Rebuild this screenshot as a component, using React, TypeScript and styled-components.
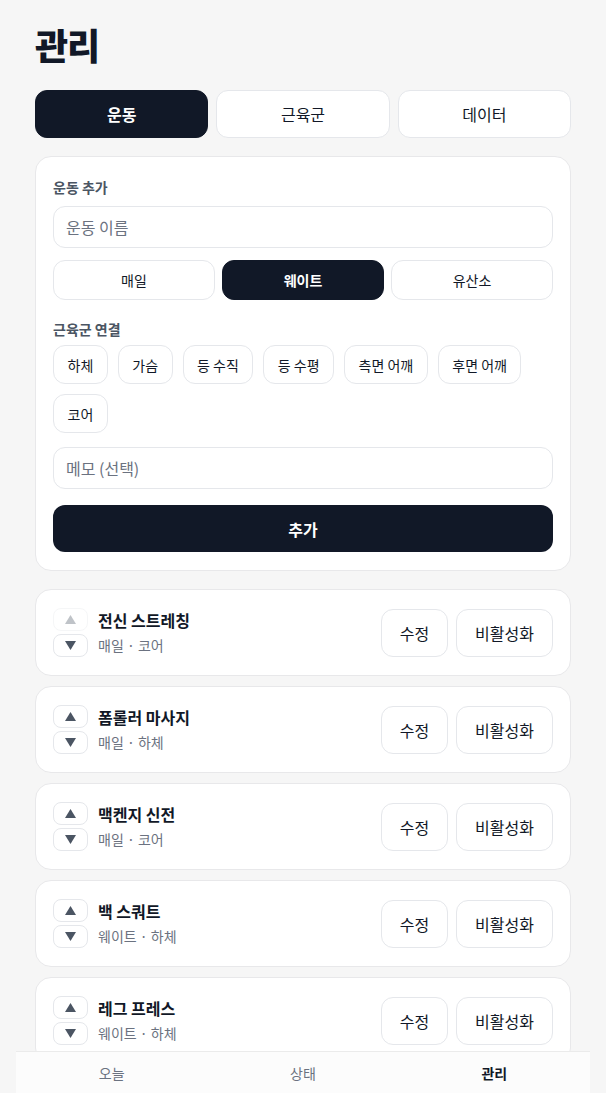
import React, {useState} from 'react';
import styled, {createGlobalStyle} from 'styled-components';

const GlobalStyle = createGlobalStyle`
  * { box-sizing: border-box; }
  body {
    margin: 0;
    background: #f6f6f6;
    font-family: "Noto Sans CJK KR", "Noto Sans", sans-serif;
    color: #111827;
  }
`;

const Page = styled.div`
  padding: 22px 35px 70px;
`;
const Title = styled.h1`
  font-size: 36px;
  line-height: 44px;
  font-weight: 800;
  margin: 0 0 24px;
  letter-spacing: -1px;
`;
const Tabs = styled.div`
  display: grid;
  grid-template-columns: repeat(3, 1fr);
  gap: 8px;
  margin-bottom: 18px;
`;
const Tab = styled.button<{ $active?: boolean }>`
  height: 48px;
  border-radius: 12px;
  border: 1px solid ${p => p.$active ? '#111827' : '#e5e7eb'};
  background: ${p => p.$active ? '#111827' : 'white'};
  color: ${p => p.$active ? 'white' : '#111827'};
  font-family: inherit;
  font-size: 16px;
  font-weight: ${p => p.$active ? 600 : 400};
`;
const Card = styled.div`
  background: white;
  border: 1px solid #e8e8ea;
  border-radius: 16px;
  padding: 20px 17px 18px;
  display: flex;
  flex-direction: column;
`;
const Label = styled.div<{ $gap?: number }>`
  font-size: 14px;
  line-height: 20px;
  font-weight: 700;
  color: #4b5563;
  margin-bottom: ${p => p.$gap ?? 9}px;
`;
const Input = styled.input`
  height: 42px;
  border: 1px solid #e5e7eb;
  border-radius: 12px;
  padding: 0 12px;
  font-family: inherit;
  font-size: 16px;
  color: #111827;
  outline: none;
  &::placeholder { color: #6b7280; }
`;
const TypeRow = styled.div`
  display: grid;
  grid-template-columns: repeat(3, 1fr);
  gap: 7px;
  margin: 12px 0 19px;
`;
const TypeButton = styled.button<{ $active?: boolean }>`
  height: 40px;
  border-radius: 12px;
  border: 1px solid ${p => p.$active ? '#111827' : '#e5e7eb'};
  background: ${p => p.$active ? '#111827' : 'white'};
  color: ${p => p.$active ? 'white' : '#111827'};
  font-family: inherit;
  font-size: 14px;
  font-weight: ${p => p.$active ? 700 : 400};
`;
const Chips = styled.div`
  display: flex;
  flex-wrap: wrap;
  gap: 10px;
  margin-bottom: 14px;
`;
const Chip = styled.button<{ $active?: boolean }>`
  height: 39px;
  padding: 0 13.5px;
  border-radius: 12px;
  border: 1px solid ${p => p.$active ? '#111827' : '#e5e7eb'};
  background: ${p => p.$active ? '#111827' : 'white'};
  color: ${p => p.$active ? 'white' : '#111827'};
  font-family: inherit;
  font-size: 14px;
`;
const AddButton = styled.button`
  margin-top: 16px;
  height: 47px;
  border: none;
  border-radius: 12px;
  background: #111827;
  color: white;
  font-family: inherit;
  font-size: 16px;
  font-weight: 700;
`;
const List = styled.div`
  display: flex;
  flex-direction: column;
  gap: 10px;
  margin-top: 18px;
`;
const Item = styled.div`
  background: white;
  border: 1px solid #e8e8ea;
  border-radius: 16px;
  padding: 18px 17px;
  display: flex;
  align-items: center;
  gap: 10px;
`;
const Arrows = styled.div`
  display: flex;
  flex-direction: column;
  gap: 3px;
`;
const ArrowButton = styled.button<{ $disabled?: boolean }>`
  width: 35px;
  height: 23px;
  border: 1px solid #e5e7eb;
  border-radius: 8px;
  background: white;
  color: #4b5563;
  padding: 0;
  display: flex;
  align-items: center;
  justify-content: center;
  opacity: ${p => p.$disabled ? 0.35 : 1};
`;
const Info = styled.div`
  flex: 1;
  display: flex;
  flex-direction: column;
  gap: 4px;
  margin-top: -2px;
`;
const Name = styled.div`
  font-size: 16px;
  line-height: 22px;
  font-weight: 700;
`;
const Meta = styled.div`
  font-size: 14px;
  line-height: 20px;
  color: #6b7280;
`;
const Actions = styled.div`
  display: flex;
  gap: 8px;
`;
const ActionButton = styled.button`
  height: 48px;
  padding: 0 18px;
  border: 1px solid #e5e7eb;
  border-radius: 12px;
  background: white;
  color: #111827;
  font-family: inherit;
  font-size: 16px;
`;
const Nav = styled.nav`
  position: fixed;
  left: 16px;
  right: 16px;
  bottom: 0;
  height: 42px;
  background: #fcfcfc;
  border-top: 1px solid #ebebeb;
  display: grid;
  grid-template-columns: repeat(3, 1fr);
  align-items: center;
`;
const NavItem = styled.div<{ $active?: boolean }>`
  text-align: center;
  font-size: 14px;
  color: ${p => p.$active ? '#111827' : '#6b7280'};
  font-weight: ${p => p.$active ? 700 : 400};
`;

const Triangle = ({down}: { down?: boolean }) => (
    <svg width="11" height="9" viewBox="0 0 11 9">
        <path d={down ? 'M0 0h11L5.5 9z' : 'M5.5 0L11 9H0z'} fill="currentColor"/>
    </svg>
);

const muscles = ['하체', '가슴', '등 수직', '등 수평', '측면 어깨', '후면 어깨', '코어'];
const exercises = [
    {name: '전신 스트레칭', meta: '매일 · 코어'},
    {name: '폼롤러 마사지', meta: '매일 · 하체'},
    {name: '맥켄지 신전', meta: '매일 · 코어'},
    {name: '백 스쿼트', meta: '웨이트 · 하체'},
    {name: '레그 프레스', meta: '웨이트 · 하체'},
];

export default function App() {
    const [tab, setTab] = useState('운동');
    const [type, setType] = useState('웨이트');

    return (
        <Page>
            <GlobalStyle/>
            <Title>관리</Title>
            <Tabs>
                {['운동', '근육군', '데이터'].map(t =>
                    <Tab key={t} $active={t === tab} onClick={() => setTab(t)}>{t}</Tab>
                )}
            </Tabs>
            <Card>
                <Label>운동 추가</Label>
                <Input placeholder="운동 이름"/>
                <TypeRow>
                    {['매일', '웨이트', '유산소'].map(t =>
                        <TypeButton key={t} $active={t === type} onClick={() => setType(t)}>{t}</TypeButton>
                    )}
                </TypeRow>
                <Label $gap={6}>근육군 연결</Label>
                <Chips>
                    {muscles.map(m => <Chip key={m}>{m}</Chip>)}
                </Chips>
                <Input placeholder="메모 (선택)"/>
                <AddButton>추가</AddButton>
            </Card>
            <List>
                {exercises.map((e, i) =>
                    <Item key={e.name}>
                        <Arrows>
                            <ArrowButton $disabled={i === 0}><Triangle/></ArrowButton>
                            <ArrowButton><Triangle down/></ArrowButton>
                        </Arrows>
                        <Info>
                            <Name>{e.name}</Name>
                            <Meta>{e.meta}</Meta>
                        </Info>
                        <Actions>
                            <ActionButton>수정</ActionButton>
                            <ActionButton>비활성화</ActionButton>
                        </Actions>
                    </Item>
                )}
            </List>
            <Nav>
                <NavItem>오늘</NavItem>
                <NavItem>상태</NavItem>
                <NavItem $active>관리</NavItem>
            </Nav>
        </Page>
    );
}
